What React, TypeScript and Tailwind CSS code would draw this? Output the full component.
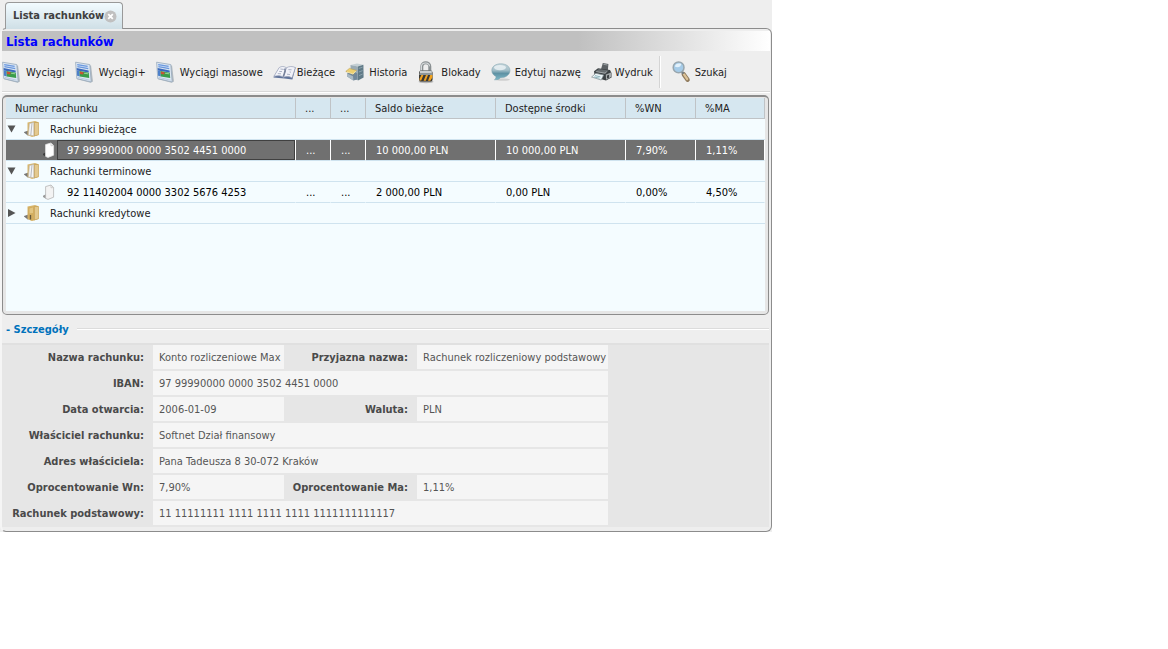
import { useState } from "react";
import type { ReactNode } from "react";

function StatementIcon() {
  return (
    <svg width="20" height="22" viewBox="0 0 20 22" aria-hidden="true">
      <path d="M2 18.2 15.5 21.8 18 20.6 16 4Z" fill="#b4bbc1" />
      <path d="M.6 1.2 14.8 3.6 16.2 21 1.8 17.6Z" fill="#dde7f2" stroke="#97a9bc" strokeWidth="0.8" />
      <path d="M1.8 2.8 13.4 4.8 13.8 7.8 2 5.6Z" fill="#cfe0f8" />
      <path d="M2.2 3.6 12.6 5.4M2.4 5.6 13.2 7.6" stroke="#6c98dc" strokeWidth="1.1" />
      <path d="M1.6 7 13.6 9.4 13.8 11.6 1.8 9.4Z" fill="#3a69bd" />
      <path d="M1.8 9.4 4.4 10 4.8 15.4 2.1 14.8Z" fill="#4b7fca" />
      <path d="M4.4 10 13.8 11.8 14.2 17 4.8 15.4Z" fill="#3a9d4a" />
      <path d="M4.8 10.6 8.6 11.3 8.2 13.4 5 12.9Z" fill="#c85534" />
      <path d="M9 12.2 13 12.8" stroke="#a7d79c" strokeWidth="0.9" />
      <path d="M2.8 16.4 14.6 19.2" stroke="#b8cbe2" strokeWidth="1" />
    </svg>
  );
}

function BookIcon() {
  return (
    <svg width="24" height="18" viewBox="0 0 24 18" aria-hidden="true">
      <path d="M.4 14.4 6 5.2 22.6 4.6 19.4 16.4 11.5 15.6Z" fill="#5f739b" />
      <path d="M.8 13.4 6.2 4.6C8.4 3 11.4 3.2 13.4 4.8L10.4 14.2C8 12.4 4.2 12.2.8 13.4Z" fill="#f4f5fa" stroke="#98a1b8" strokeWidth="0.7" />
      <path d="M13.4 4.8C16 3.2 19.6 3 22.4 4.6L19 14.9C16.4 13.2 13 13 10.4 14.2Z" fill="#f0f1f8" stroke="#98a1b8" strokeWidth="0.7" />
      <path d="M7.4 6 10.8 6.4M6.2 8.4 9 8.6M4.8 10.6 8 10.8M15.4 6.6 18.6 6.8M16.6 9 18 9.2M14 11.2 17 11.6" stroke="#a3aac0" strokeWidth="0.9" />
      <path d="M11.8 5.5C13 8 11.4 10 10.3 13.4" fill="none" stroke="#76819b" strokeWidth="1.6" />
    </svg>
  );
}

function HistoryIcon() {
  return (
    <svg width="20" height="20" viewBox="0 0 20 20" aria-hidden="true">
      <path d="M5.5 3 12 1.6 18.4 2.8 12.8 4.6Z" fill="#c3cfd4" />
      <path d="M5.5 3 12.8 4.6 13 18.6 5.8 14.5Z" fill="#9aabb4" />
      <path d="M12.8 4.6 18.4 2.8 18.6 15.6 13 18.6Z" fill="#607a87" />
      <path d="M13.8 6.4 17.6 5.2M13.9 10 17.6 8.6M14 13.6 17.7 12" stroke="#8aa1ac" strokeWidth="1" />
      <path d="M2 11.4 8 9.4 12.4 11.4 12.4 17.4 8.4 18.4 2.2 14.6Z" fill="#72889a" />
      <path d="M2 11.4 8 14.2 8.4 18.4 2.2 14.6Z" fill="#a9b9c3" />
      <path d="M.8 9.4 4.4 6.4 11.4 8.4 8.2 12.2Z" fill="#eed06f" stroke="#bf9f49" strokeWidth="0.6" />
      <path d="M2 9.8 8 12 11 8.8" fill="none" stroke="#fdf1bd" strokeWidth="0.8" />
    </svg>
  );
}

function PadlockIcon() {
  return (
    <svg width="18" height="24" viewBox="0 0 18 24" aria-hidden="true">
      <ellipse cx="9" cy="21.8" rx="7.5" ry="1.4" fill="#b6b6b6" />
      <path d="M4.8 12V6.5C4.8 1.4 12.8 1.4 12.8 6.5V12" fill="none" stroke="#8a9092" strokeWidth="3" />
      <path d="M4.4 12V6.5C4.8 2.2 12 1.7 12.5 6.2" fill="none" stroke="#d9dddf" strokeWidth="1.1" />
      <rect x="2" y="10.4" width="13.6" height="11.2" rx="2.6" fill="#3b3934" />
      <path d="M3 10.6H14.8L15.4 15H2.2Z" fill="#8f9798" />
      <path d="M3 12H14.6" stroke="#d9dddd" strokeWidth="1.6" />
      <path d="M2.4 19 4.4 15H6.4L4.2 20.6H2.8ZM6.6 20.8 9 15H11L8.8 20.8ZM11 20.8 13.2 15H15.4V17.5L13.3 20.8Z" fill="#f0a21f" />
    </svg>
  );
}

function BubbleIcon() {
  return (
    <svg width="20" height="20" viewBox="0 0 20 20" aria-hidden="true">
      <defs>
        <linearGradient id="bubble" x1="0" y1="0" x2="0" y2="1">
          <stop offset="0" stopColor="#c4d5da" />
          <stop offset="0.4" stopColor="#a4bfc9" />
          <stop offset="0.6" stopColor="#5f92a4" />
          <stop offset="1" stopColor="#7db9c8" />
        </linearGradient>
      </defs>
      <ellipse cx="12" cy="17.6" rx="7" ry="1.2" fill="#cfcfcf" />
      <path d="M9.8 1.8C15 1.8 19 4.4 19 8.5S15 15.8 9.6 15.7C8 17.4 6 18 3.4 17.8 4.6 16.8 5 16 5 14.6 2.4 13.2.8 11.2.8 8.5.8 4.4 4.6 1.8 9.8 1.8Z" fill="url(#bubble)" stroke="#7da0ac" strokeWidth="0.5" />
      <ellipse cx="9" cy="5.6" rx="6" ry="2.6" fill="#f1f7f9" opacity="0.75" />
    </svg>
  );
}

function PrinterIcon() {
  return (
    <svg width="21" height="20" viewBox="0 0 21 20" aria-hidden="true">
      <path d="M11.8 1 17.4 2 16.8 9.2 9.8 8Z" fill="#5b6063" />
      <path d="M12.4 2.3 16.5 3" stroke="#979da0" strokeWidth="1" />
      <path d="M3 9.2 7 6.2 19 8 20.5 11V15.5L15 18.6 4 15.5Z" fill="#3b4043" />
      <path d="M4 9.6 8 7 17.7 8.6 14.3 11.8Z" fill="#666c6f" />
      <path d="M5.2 9.6 14 11.2 15.7 9.7" fill="none" stroke="#a8aeb0" strokeWidth="0.9" />
      <path d="M14.8 12.5 20 10.6V15L15 17.8Z" fill="#a4a9ab" />
      <path d="M16.2 13.5 17.8 12.8V15.8L16.2 16.6Z" fill="#25292b" />
      <path d="M.6 15 4.8 11.3 12.7 13 10.2 18Z" fill="#edf5f8" stroke="#7e898e" strokeWidth="0.7" />
      <path d="M4 13.6 9.5 14.9M3 15 8.5 16.2" stroke="#8fb5be" strokeWidth="1" />
    </svg>
  );
}

function SearchIcon() {
  return (
    <svg width="21" height="22" viewBox="0 0 21 22" aria-hidden="true">
      <path d="M12.8 13.4 16.6 18.8" stroke="#8f7a5c" strokeWidth="4.4" strokeLinecap="round" />
      <path d="M13 13.4 16.2 18" stroke="#dcc297" strokeWidth="2.2" strokeLinecap="round" />
      <path d="m10.2 9.8 2.2 3" stroke="#777e82" strokeWidth="2.6" />
      <circle cx="7.6" cy="6.4" r="5.4" fill="#a5cbe8" stroke="#98a6ae" strokeWidth="1.5" />
      <path d="M3.8 5.6C4.3 3.2 7 1.8 10.2 3 10 5.8 7 7.4 3.8 5.6Z" fill="#e2f1fb" />
    </svg>
  );
}

function FolderIcon({ open }: { open: boolean }) {
  return (
    <svg width="16" height="18" viewBox="0 0 16 18" aria-hidden="true">
      <path d="M-.4 12.2 4.4 10.6 4.4 16Z" fill="#777" />
      <path d="M3.5 2.5 11 1 14.6 2.2V15L8 17 3.5 15Z" fill="#d8b66c" />
      <path d="M9.8 2.2 14.6 2.2V15L9.8 16.5Z" fill="#c9a55c" />
      <path d="M10.8 3 14 3V14.4L10.8 15.4Z" fill="#e3c98f" />
      {open ? (
        <>
          <path d="M5.4 3.5 9.8 2.4V15.8L4.4 15Z" fill="#f5f5f5" stroke="#b8b4a8" strokeWidth="0.6" />
          <path d="M8 3.2 6.8 15" stroke="#a5aab2" strokeWidth="0.8" />
        </>
      ) : (
        <>
          <path d="M4 3.5 10 2.4V16L7 16.4 4 14Z" fill="#d2ad60" />
          <path d="M5.4 4.4 9 3.6V9L5.4 9.6Z" fill="#e3c683" />
          <path d="M6.5 11V15.5" stroke="#65583c" strokeWidth="1.3" />
        </>
      )}
    </svg>
  );
}

function PageIcon({ selected }: { selected: boolean }) {
  return (
    <svg width="14" height="18" viewBox="0 0 14 18" aria-hidden="true">
      <path d="M-1 13.4 3.4 11V16Z" fill={selected ? "#3e3e3e" : "#999"} />
      <path d="M2.6 3.6 8 2 10.6 4.5V14.2L5 16.4 2.6 15.4Z" fill={selected ? "#fff" : "#f3f3f3"} stroke={selected ? "#e4e4e4" : "#b5b5b5"} strokeWidth="0.8" />
      <path d="M8 2V4.8L10.6 4.5" fill="none" stroke="#bfbfbf" strokeWidth="0.7" />
    </svg>
  );
}

type Tool = { label: string; icon: ReactNode };

const tools: Tool[] = [
  { label: "Wyciągi", icon: <StatementIcon /> },
  { label: "Wyciągi+", icon: <StatementIcon /> },
  { label: "Wyciągi masowe", icon: <StatementIcon /> },
  { label: "Bieżące", icon: <BookIcon /> },
  { label: "Historia", icon: <HistoryIcon /> },
  { label: "Blokady", icon: <PadlockIcon /> },
  { label: "Edytuj nazwę", icon: <BubbleIcon /> },
  { label: "Wydruk", icon: <PrinterIcon /> },
];

function ToolButton({ label, icon }: Tool) {
  return (
    <button type="button" className="flex h-6 items-center whitespace-nowrap">
      <span className="flex w-6 justify-start">{icon}</span>
      <span className="pt-[2px]">{label}</span>
    </button>
  );
}

type Account = { number: string; cells: string[] };
type Group = { name: string; accounts: Account[] };

const groups: Group[] = [
  {
    name: "Rachunki bieżące",
    accounts: [
      { number: "97 99990000 0000 3502 4451 0000", cells: ["...", "...", "10 000,00 PLN", "10 000,00 PLN", "7,90%", "1,11%"] },
    ],
  },
  {
    name: "Rachunki terminowe",
    accounts: [
      { number: "92 11402004 0000 3302 5676 4253", cells: ["...", "...", "2 000,00 PLN", "0,00 PLN", "0,00%", "4,50%"] },
    ],
  },
  { name: "Rachunki kredytowe", accounts: [] },
];

const headers = ["Numer rachunku", "...", "...", "Saldo bieżące", "Dostępne środki", "%WN", "%MA"];

function AccountRow({ account, selected, onSelect }: { account: Account; selected: boolean; onSelect: () => void }) {
  const tone = selected ? "bg-[#707070] text-white" : "text-black";
  const divider = selected ? "border-r border-r-white" : "border-r border-r-transparent";
  return (
    <tr className={tone} onClick={onSelect} aria-selected={selected}>
      <td className={"h-[21px] border-b border-b-[#cfe3ef] p-0 " + divider}>
        <div className="flex h-5 items-center pl-[37px]">
          <PageIcon selected={selected} />
          <span className={"flex h-5 flex-1 items-center border pt-[2px] pl-[9px] " + (selected ? "border-[#404040]" : "border-transparent")}>
            {account.number}
          </span>
        </div>
      </td>
      {account.cells.map((cell, i) => (
        <td key={i} className={"h-[21px] border-b border-b-[#cfe3ef] pt-[2px] pr-0 pb-0 pl-[10px] " + divider}>
          {cell}
        </td>
      ))}
    </tr>
  );
}

function AccountTable() {
  const [closed, setClosed] = useState<string[]>(["Rachunki kredytowe"]);
  const [selected, setSelected] = useState(groups[0].accounts[0].number);
  const toggle = (name: string) =>
    setClosed((c) => (c.includes(name) ? c.filter((n) => n !== name) : [...c, name]));

  return (
    <div className="mr-[2px] rounded-[5px] border border-t-2 border-[#8c8c8c] bg-[#e6e6e6] px-[3px] pt-px pb-[3px]">
      <div className="min-h-[213px] bg-[#f4fcff]">
        <table className="w-full table-fixed border-separate border-spacing-0 text-left">
          <colgroup>
            <col />
            <col className="w-[35px]" />
            <col className="w-[35px]" />
            <col className="w-[130px]" />
            <col className="w-[130px]" />
            <col className="w-[70px]" />
            <col className="w-[69px]" />
          </colgroup>
          <thead>
            <tr className="bg-[#d6e7f0] text-[#222]">
              {headers.map((h, i) => (
                <th key={i} scope="col" className="h-[21px] border-r border-b border-[#bfc3c6] pt-[2px] pr-0 pb-0 pl-[9px] font-normal">
                  {h}
                </th>
              ))}
            </tr>
          </thead>
          {groups.map((g) => {
            const open = !closed.includes(g.name);
            return (
              <tbody key={g.name}>
                <tr>
                  <td colSpan={7} className="h-[21px] border-b border-[#cfe3ef] p-0">
                    <button type="button" aria-expanded={open} onClick={() => toggle(g.name)} className="flex h-5 items-center">
                      <svg width="18" height="10" viewBox="0 0 18 10" aria-hidden="true">
                        <path d={open ? "M1.5 1.5H9.5L5.5 8.5Z" : "M2 1V9L9.5 5Z"} fill="#555" />
                      </svg>
                      <FolderIcon open={open} />
                      <span className="pt-[2px] pl-[10px]">{g.name}</span>
                    </button>
                  </td>
                </tr>
                {open &&
                  g.accounts.map((a) => (
                    <AccountRow key={a.number} account={a} selected={selected === a.number} onSelect={() => setSelected(a.number)} />
                  ))}
              </tbody>
            );
          })}
        </table>
      </div>
    </div>
  );
}

const details: [string, string][][] = [
  [["Nazwa rachunku:", "Konto rozliczeniowe Max"], ["Przyjazna nazwa:", "Rachunek rozliczeniowy podstawowy"]],
  [["IBAN:", "97 99990000 0000 3502 4451 0000"]],
  [["Data otwarcia:", "2006-01-09"], ["Waluta:", "PLN"]],
  [["Właściciel rachunku:", "Softnet Dział finansowy"]],
  [["Adres właściciela:", "Pana Tadeusza 8 30-072 Kraków"]],
  [["Oprocentowanie Wn:", "7,90%"], ["Oprocentowanie Ma:", "1,11%"]],
  [["Rachunek podstawowy:", "11 11111111 1111 1111 1111 1111111111117"]],
];

function Details() {
  return (
    <section>
      <h2 className="flex h-7 items-center gap-2 pl-1 font-bold text-[#0072bc]">
        <span className="pt-[2px]">- Szczegóły</span>
        <span className="mr-[2px] h-[2px] flex-1 border-t border-[#dcdcdc] bg-white" />
      </h2>
      <div className="mr-[2px] border-t-2 border-[#e0e0e0] bg-[#e6e6e6]">
        <table className="w-[606px] table-fixed border-separate border-spacing-0 text-[#555]">
          <colgroup>
            <col className="w-[151px]" />
            <col className="w-[131px]" />
            <col className="w-[133px]" />
            <col />
          </colgroup>
          <tbody>
            {details.map((row, i) => (
              <tr key={i}>
                {row.map(([label, value]) => [
                  <th key={label} scope="row" className="h-[26px] border-b-2 border-[#e6e6e6] pt-[2px] pr-[9px] pb-0 pl-0 text-right font-bold whitespace-nowrap text-[#4a4a4a]">
                    {label}
                  </th>,
                  <td key={label + "-value"} colSpan={row.length === 1 ? 3 : 1} className="h-[26px] border-b-2 border-[#e6e6e6] bg-[#f5f5f5] pt-[2px] pr-0 pb-0 pl-[6px] whitespace-nowrap">
                    {value}
                  </td>,
                ])}
              </tr>
            ))}
          </tbody>
        </table>
      </div>
    </section>
  );
}

export default function App() {
  return (
    <main className="w-full max-w-[772px] bg-[#eee] font-['DejaVu_Sans_Condensed','Noto_Sans',sans-serif] text-[11px] leading-[14px] text-[#222]">
      <nav className="flex h-7 items-end pl-[5px]">
        <div className="-mb-px flex h-[27px] items-center rounded-t-[4px] border border-b-0 border-[#999] bg-linear-to-b from-[#f2fbff] to-[#cfdfe6] pr-[5px] pl-[7px] font-bold text-[#404040]">
          <a href="#lista">Lista rachunków</a>
          <button type="button" aria-label="Zamknij" className="flex">
            <svg width="13" height="13" viewBox="0 0 13 13" aria-hidden="true">
              <circle cx="6.5" cy="6.5" r="6" fill="#c0c0c0" />
              <path d="M4.2 4.2 8.8 8.8M8.8 4.2 4.2 8.8" stroke="#fff" strokeWidth="1.8" />
            </svg>
          </button>
        </div>
      </nav>
      <div id="lista" className="rounded-md border border-l-2 border-[#8c8c8c] border-l-[#f5f5f5] pt-[2px] pb-1">
        <h1 className="mr-px flex h-5 items-center bg-linear-to-r from-[#c0c0c0] from-75% to-white pt-[2px] pl-1 text-[13px] font-bold text-[#0000ff]">
          Lista rachunków
        </h1>
        <div className="mr-px mb-[3px] flex h-[41px] items-center gap-[10px] border-b border-[#d8d8d8] pt-[2px] shadow-[0_1px_0_#fff]" role="toolbar">
          {tools.map((t) => (
            <ToolButton key={t.label} {...t} />
          ))}
          <span className="-ml-1 h-8 w-[2px] border-l border-[#d4d4d4] bg-white" />
          <ToolButton label="Szukaj" icon={<SearchIcon />} />
        </div>
        <AccountTable />
        <Details />
      </div>
    </main>
  );
}
